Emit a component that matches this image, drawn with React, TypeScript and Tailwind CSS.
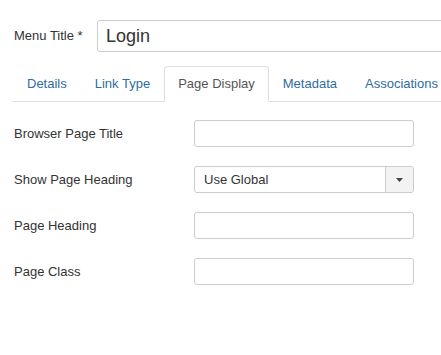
import React from "react";

const tabs = ["Details", "Link Type", "Page Display", "Metadata", "Associations"];

const Field: React.FC<{ label: string; children: React.ReactNode }> = ({ label, children }) => (
  <div className="flex items-center h-[27px]">
    <label className="w-[180px] shrink-0 text-[13px] text-[#333]">{label}</label>
    {children}
  </div>
);

const TextBox = () => (
  <input
    type="text"
    className="w-[220px] h-[27px] rounded-[3px] border border-[#ccc] bg-white px-2 text-[13px] outline-none"
  />
);

export default function App() {
  return (
    <div
      className="w-[441px] h-[355px] overflow-hidden bg-white text-[#333]"
      style={{ fontFamily: '"Liberation Sans", Arial, sans-serif' }}
    >
      {/* Menu title */}
      <div className="flex items-center pt-[20px] pl-[14px]">
        <span className="w-[83px] shrink-0 whitespace-nowrap text-[13px]">Menu Title *</span>
        <div className="h-[32px] w-[360px] shrink-0 rounded-[3px] border border-[#ccc] bg-white pl-[8px] flex items-center text-[18px] text-[#333]">
          Login
        </div>
      </div>

      {/* Tabs */}
      <div className="mt-[14px] ml-[13px] flex w-[440px] border-b border-[#ddd] text-[13px]">
        {tabs.map((t) => {
          const active = t === "Page Display";
          return (
            <div
              key={t}
              className={
                active
                  ? "-mb-px h-[36px] flex items-center px-[13px] rounded-t-[4px] border border-[#ddd] border-b-white bg-white text-[#555] whitespace-nowrap"
                  : "h-[35px] flex items-center px-[14px] text-[#2f6ca3] whitespace-nowrap"
              }
            >
              {t}
            </div>
          );
        })}
      </div>

      {/* Form */}
      <div className="mt-[18px] pl-[14px] flex flex-col gap-[19px]">
        <Field label="Browser Page Title">
          <TextBox />
        </Field>
        <Field label="Show Page Heading">
          <div className="flex h-[27px] w-[220px] rounded-[3px] border border-[#ccc] bg-white">
            <div className="flex-1 flex items-center pl-[9px] text-[13px]">Use Global</div>
            <div className="w-[28px] flex items-center justify-center bg-[#f3f3f3] border-l border-[#ccc] rounded-r-[3px]">
              <svg width="7" height="4" viewBox="0 0 7 4">
                <path d="M0 0h7L3.5 4z" fill="#444" />
              </svg>
            </div>
          </div>
        </Field>
        <Field label="Page Heading">
          <TextBox />
        </Field>
        <Field label="Page Class">
          <TextBox />
        </Field>
      </div>
    </div>
  );
}
